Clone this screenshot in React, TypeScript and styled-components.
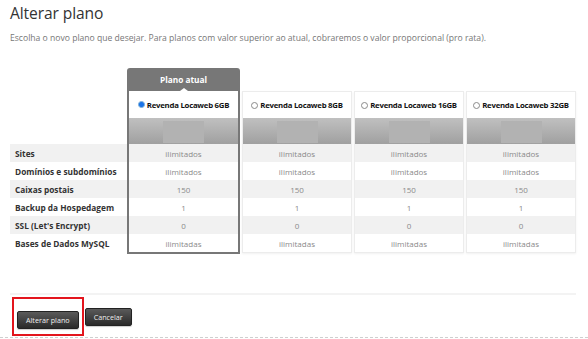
import styled, { createGlobalStyle } from "styled-components";

const GlobalStyle = createGlobalStyle`
  html, body {
    margin: 0;
    padding: 0;
    background: #fff;
  }
  body {
    font-family: "Open Sans", "DejaVu Sans", sans-serif;
  }
`;

type Plan = {
  name: string;
  current?: boolean;
};

const plans: Plan[] = [
  { name: "Revenda Locaweb 6GB", current: true },
  { name: "Revenda Locaweb 8GB" },
  { name: "Revenda Locaweb 16GB" },
  { name: "Revenda Locaweb 32GB" },
];

const features = [
  { label: "Sites", value: "ilimitados" },
  { label: "Domínios e subdomínios", value: "ilimitados" },
  { label: "Caixas postais", value: "150" },
  { label: "Backup da Hospedagem", value: "1" },
  { label: "SSL (Let's Encrypt)", value: "0" },
  { label: "Bases de Dados MySQL", value: "ilimitadas" },
];

const App = () => {
  return (
    <Page>
      <GlobalStyle />
      <Title>Alterar plano</Title>
      <Subtitle>
        Escolha o novo plano que desejar. Para planos com valor superior ao
        atual, cobraremos o valor proporcional (pro rata).
      </Subtitle>

      <Table>
        <LabelColumn>
          {features.map((f, i) => (
            <Cell key={f.label} $odd={i % 2 === 0}>
              <Label>{f.label}</Label>
            </Cell>
          ))}
        </LabelColumn>

        {plans.map((plan) => (
          <PlanColumn key={plan.name} $current={plan.current}>
            <TagSlot>{plan.current && <Tag>Plano atual</Tag>}</TagSlot>
            <Card $current={plan.current}>
              <PlanHeader $current={plan.current}>
                <Radio $checked={plan.current} />
                <PlanName>{plan.name}</PlanName>
              </PlanHeader>
              <PriceBand>
                <PriceMask />
              </PriceBand>
              {features.map((f, i) => (
                <Cell key={f.label} $odd={i % 2 === 0}>
                  <Value>{f.value}</Value>
                </Cell>
              ))}
            </Card>
          </PlanColumn>
        ))}
      </Table>

      <Divider />

      <Actions>
        <Highlight>
          <Button>Alterar plano</Button>
        </Highlight>
        <Button>Cancelar</Button>
      </Actions>

      <Dashed />
    </Page>
  );
};

const Page = styled.div`
  width: 588px;
  height: 339px;
  box-sizing: border-box;
  padding: 0 10px;
  overflow: hidden;
  display: flex;
  flex-direction: column;
`;

const Title = styled.h1`
  margin: 2px 0 0;
  color: #333;
  font-size: 15.6px;
  font-weight: 400;
  line-height: 22px;
  letter-spacing: -0.1px;
`;

const Subtitle = styled.p`
  margin: 8px 0 0;
  color: #777;
  font-size: 8.6px;
  line-height: 12px;
`;

const Table = styled.div`
  margin-top: 24px;
  display: flex;
  flex-direction: row;
  align-items: flex-start;
  gap: 2px;
`;

const LabelColumn = styled.div`
  width: 117px;
  margin-right: -2px;
  padding-top: 76px;
  display: flex;
  flex-direction: column;
`;

const Cell = styled.div<{ $odd?: boolean }>`
  height: 18px;
  display: flex;
  align-items: center;
  background: ${({ $odd }) => ($odd ? "#f1f1f1" : "#fff")};
`;

const Label = styled.span`
  padding-left: 5px;
  color: #333;
  font-size: 8.3px;
  font-weight: 700;
  white-space: nowrap;
`;

const Value = styled.span`
  width: 100%;
  text-align: center;
  color: #8a8a8a;
  font-size: 8px;
`;

const PlanColumn = styled.div<{ $current?: boolean }>`
  width: ${({ $current }) => ($current ? "113px" : "110px")};
  display: flex;
  flex-direction: column;
`;

const TagSlot = styled.div`
  height: 23px;
  display: flex;
  flex-direction: column;
  justify-content: flex-end;
`;

const Tag = styled.div`
  position: relative;
  height: 23px;
  display: flex;
  align-items: center;
  justify-content: center;
  background: #777;
  border-radius: 3px 3px 0 0;
  color: #fff;
  font-size: 8.3px;
  font-weight: 700;

  &::after {
    content: "";
    position: absolute;
    bottom: 0;
    left: 50%;
    margin-left: -4px;
    border-left: 4px solid transparent;
    border-right: 4px solid transparent;
    border-bottom: 3px solid #fff;
  }
`;

const Card = styled.div<{ $current?: boolean }>`
  display: flex;
  flex-direction: column;
  background: #fff;
  border: ${({ $current }) =>
    $current ? "2px solid #777" : "1px solid #ececec"};
  border-top: ${({ $current }) => ($current ? "none" : "1px solid #ececec")};
  box-shadow: ${({ $current }) =>
    $current ? "none" : "0 1px 2px rgba(0, 0, 0, 0.06)"};
`;

const PlanHeader = styled.div<{ $current?: boolean }>`
  height: ${({ $current }) => ($current ? "27px" : "26px")};
  display: flex;
  align-items: center;
  justify-content: center;
  gap: 2px;
`;

const Radio = styled.span<{ $checked?: boolean }>`
  width: 7px;
  height: 7px;
  box-sizing: border-box;
  border-radius: 50%;
  flex-shrink: 0;
  border: 1px solid ${({ $checked }) => ($checked ? "#5b9bd5" : "#8a8a8a")};
  background: ${({ $checked }) =>
    $checked
      ? "radial-gradient(circle, #1a73e8 0 2.4px, #cfe3f7 2.6px)"
      : "#fff"};
`;

const PlanName = styled.span`
  color: #111;
  font-size: 7.8px;
  font-weight: 700;
  letter-spacing: -0.25px;
  white-space: nowrap;
`;

const PriceBand = styled.div`
  height: 26px;
  display: flex;
  align-items: center;
  justify-content: center;
  background: linear-gradient(#c0c0c0, #a0a0a0);
`;

const PriceMask = styled.div`
  width: 41px;
  height: 22px;
  margin-top: 1px;
  background: #b2b2b2;
`;

const Divider = styled.div`
  margin-top: 39px;
  height: 2px;
  width: 566px;
  background: #f3f3f3;
`;

const Actions = styled.div`
  margin-top: 2px;
  display: flex;
  flex-direction: row;
  align-items: center;
  gap: 1px;
  padding-left: 2px;
`;

const Highlight = styled.div`
  padding: 7px 3px 5px;
  border: 2px solid #e3151d;
`;

const Button = styled.button`
  height: 18px;
  padding: 0 8px;
  border: 1px solid #222;
  border-radius: 2px;
  background: linear-gradient(#5a5a5a, #2a2a2a);
  color: #eee;
  font-family: "Open Sans", "DejaVu Sans", sans-serif;
  font-size: 7.2px;
  line-height: 16px;
  box-shadow: 0 1px 1px rgba(0, 0, 0, 0.2);
`;

const Dashed = styled.div`
  margin-top: auto;
  margin-left: -10px;
  width: 588px;
  height: 1px;
  border-top: 1px dashed #cfcfcf;
`;

export default App;
